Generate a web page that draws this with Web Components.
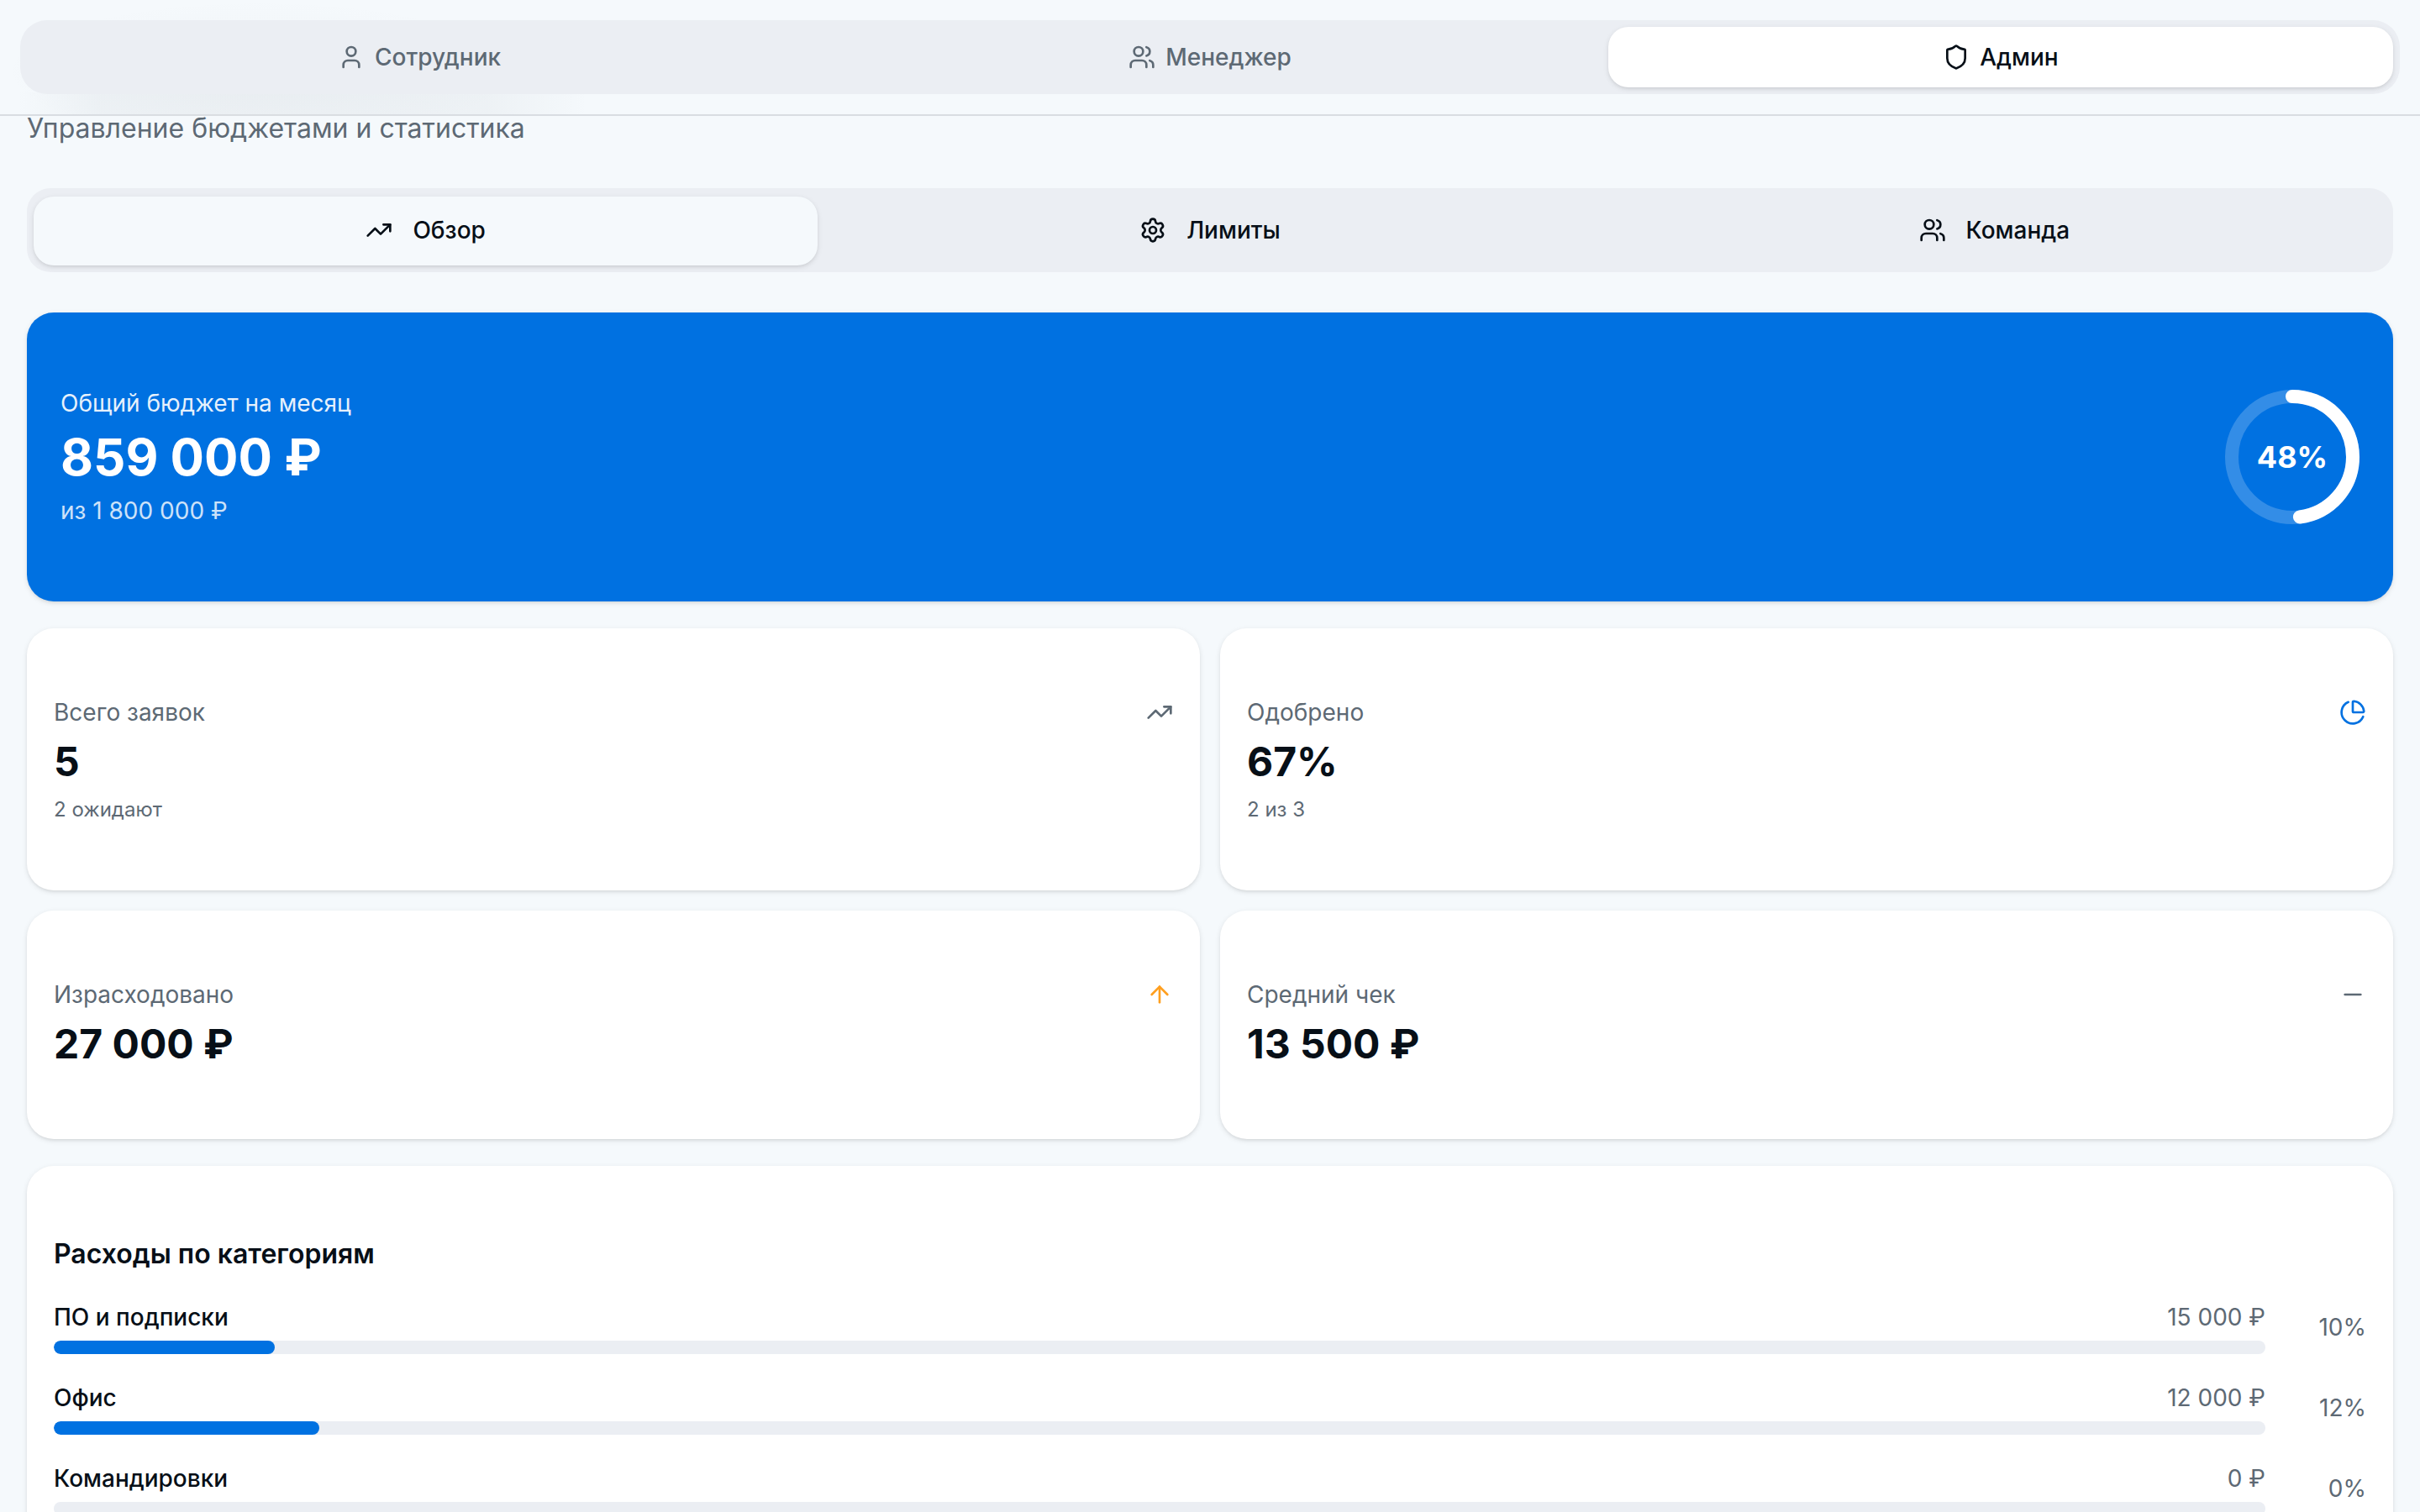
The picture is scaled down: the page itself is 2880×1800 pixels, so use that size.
<!DOCTYPE html>
<html lang="ru">
<head>
<meta charset="utf-8">
<title>Бюджеты</title>
<style>
  html, body { margin: 0; height: 100%; }
  body {
    --bg: #f5f9fc;
    --card: #ffffff;
    --muted: #ebeef3;
    --fg: #070f17;
    --soft: #5d6974;
    --blue: #0071e1;
    --orange: #ff9f1f;
    --shadow: 0 2px 6px rgba(0, 0, 0, .1), 0 2px 4px -2px rgba(0, 0, 0, .1);
    background: var(--bg);
    color: var(--fg);
    font: 400 28px/40px Inter, "Liberation Sans", sans-serif;
    font-optical-sizing: none;
    font-variation-settings: "opsz" 14;
    -webkit-font-smoothing: antialiased;
    overflow: hidden;
  }
</style>
</head>
<body>

<admin-page>
  <role-bar slot="header">
    <role-tab icon="user">Сотрудник</role-tab>
    <role-tab icon="users">Менеджер</role-tab>
    <role-tab icon="shield" active>Админ</role-tab>
  </role-bar>

  <span slot="subtitle">Управление бюджетами и статистика</span>

  <tab-list>
    <tab-item icon="trending" active>Обзор</tab-item>
    <tab-item icon="settings">Лимиты</tab-item>
    <tab-item icon="users">Команда</tab-item>
  </tab-list>

  <budget-card percent="48">
    <span slot="label">Общий бюджет на месяц</span>
    <span slot="value">859&nbsp;000&nbsp;₽</span>
    <span slot="total">из 1&nbsp;800&nbsp;000&nbsp;₽</span>
  </budget-card>

  <stat-grid>
    <stat-card icon="trending" label="Всего заявок" note="2 ожидают">5</stat-card>
    <stat-card icon="pie" tone="blue" label="Одобрено" note="2 из 3">67%</stat-card>
    <stat-card icon="up" tone="orange" label="Израсходовано">27&nbsp;000&nbsp;₽</stat-card>
    <stat-card icon="minus" label="Средний чек">13&nbsp;500&nbsp;₽</stat-card>
  </stat-grid>

  <category-card>
    <span slot="title">Расходы по категориям</span>
    <category-row percent="10" amount="15&nbsp;000&nbsp;₽">ПО и подписки</category-row>
    <category-row percent="12" amount="12&nbsp;000&nbsp;₽">Офис</category-row>
    <category-row percent="0" amount="0&nbsp;₽">Командировки</category-row>
  </category-card>
</admin-page>

<script>
  const ICONS = {
    user: '<path d="M19 21v-2a4 4 0 0 0-4-4H9a4 4 0 0 0-4 4v2"/><circle cx="12" cy="7" r="4"/>',
    users: '<path d="M16 21v-2a4 4 0 0 0-4-4H6a4 4 0 0 0-4 4v2"/><circle cx="9" cy="7" r="4"/><path d="M22 21v-2a4 4 0 0 0-3-3.87"/><path d="M16 3.13a4 4 0 0 1 0 7.75"/>',
    shield: '<path d="M20 13c0 5-3.5 7.5-7.66 8.95a1 1 0 0 1-.67-.01C7.5 20.5 4 18 4 13V6a1 1 0 0 1 1-1c2 0 4.5-1.2 6.24-2.72a1.17 1.17 0 0 1 1.52 0C14.51 3.81 17 5 19 5a1 1 0 0 1 1 1z"/>',
    trending: '<path d="M16 7h6v6"/><path d="m22 7-8.5 8.5-5-5L2 17"/>',
    settings: '<path d="M9.671 4.136a2.34 2.34 0 0 1 4.659 0 2.34 2.34 0 0 0 3.319 1.915 2.34 2.34 0 0 1 2.33 4.033 2.34 2.34 0 0 0 0 3.831 2.34 2.34 0 0 1-2.33 4.033 2.34 2.34 0 0 0-3.319 1.915 2.34 2.34 0 0 1-4.659 0 2.34 2.34 0 0 0-3.32-1.915 2.34 2.34 0 0 1-2.33-4.033 2.34 2.34 0 0 0 0-3.831A2.34 2.34 0 0 1 6.35 6.051a2.34 2.34 0 0 0 3.319-1.915"/><circle cx="12" cy="12" r="3"/>',
    pie: '<path d="M21 12c.552 0 1.005-.449.95-.998a10 10 0 0 0-8.953-8.951c-.55-.055-.998.398-.998.95v8a1 1 0 0 0 1 1z"/><path d="M21.21 15.89A10 10 0 1 1 8 2.83"/>',
    up: '<path d="m5 12 7-7 7 7"/><path d="M12 19V5"/>',
    minus: '<path d="M5 12h14"/>'
  };

  // fills an open shadow root with the given markup
  function shadow(el, html) {
    el.attachShadow({mode: 'open'}).innerHTML = html;
  }

  customElements.define('line-icon', class extends HTMLElement {
    connectedCallback() {
      if (this.shadowRoot) return;
      shadow(this, `
        <style>
          :host { display: block; flex: none; width: 32px; height: 32px; }
          svg { display: block; width: 100%; height: 100%; }
        </style>
        <svg viewBox="0 0 24 24" fill="none" stroke="currentColor" stroke-width="2"
             stroke-linecap="round" stroke-linejoin="round">${ICONS[this.getAttribute('name')]}</svg>
      `);
    }
  });

  customElements.define('admin-page', class extends HTMLElement {
    constructor() {
      super();
      shadow(this, `
        <style>
          :host { display: flex; flex-direction: column; height: 1800px; overflow: hidden; }
          header {
            flex: none;
            padding: 24px;
            border-bottom: 2px solid #d9dde2;
            background:
              radial-gradient(closest-side, rgba(93, 105, 116, .04), transparent) 0 0 / 620px 170px no-repeat,
              linear-gradient(90deg, transparent 20px, rgba(93, 105, 116, .05) 120px,
                rgba(93, 105, 116, .05) 580px, transparent 700px) 0 100% / 100% 26px no-repeat,
              var(--bg);
          }
          main {
            flex: none;
            display: flex;
            flex-direction: column;
            gap: 32px;
            margin-top: -10px;
            padding: 0 32px 32px;
          }
          p { margin: 0 0 15px; padding-top: 1px; font-size: 32px; line-height: 48px; color: var(--soft); }
        </style>
        <header><slot name="header"></slot></header>
        <main>
          <p><slot name="subtitle"></slot></p>
          <slot></slot>
        </main>
      `);
    }
  });

  customElements.define('role-bar', class extends HTMLElement {
    constructor() {
      super();
      shadow(this, `
        <style>
          :host {
            display: grid;
            grid-template-columns: repeat(3, 1fr);
            gap: 7px;
            padding: 8px;
            border-radius: 32px;
            background: var(--muted);
          }
        </style>
        <slot></slot>
      `);
    }
  });

  customElements.define('role-tab', class extends HTMLElement {
    constructor() {
      super();
      shadow(this, `
        <style>
          :host {
            display: flex;
            align-items: center;
            justify-content: center;
            gap: 12px;
            height: 72px;
            border-radius: 24px;
            font-weight: 500;
            color: var(--soft);
          }
          :host([active]) { background: var(--card); color: var(--fg); box-shadow: var(--shadow); }
        </style>
        <line-icon name="${this.getAttribute('icon')}"></line-icon>
        <slot></slot>
      `);
    }
  });

  customElements.define('tab-list', class extends HTMLElement {
    constructor() {
      super();
      shadow(this, `
        <style>
          :host {
            display: grid;
            grid-template-columns: repeat(3, 1fr);
            padding: 10px 8px 8px;
            margin-bottom: 16px;
            border-radius: 28px;
            background: var(--muted);
          }
        </style>
        <slot></slot>
      `);
    }
  });

  customElements.define('tab-item', class extends HTMLElement {
    constructor() {
      super();
      shadow(this, `
        <style>
          :host {
            display: flex;
            align-items: center;
            justify-content: center;
            gap: 24px;
            height: 80px;
            padding-bottom: 2px;
            border-radius: 24px;
            font-weight: 500;
          }
          :host([active]) { background: var(--bg); box-shadow: var(--shadow); }
        </style>
        <line-icon name="${this.getAttribute('icon')}"></line-icon>
        <slot></slot>
      `);
    }
  });

  customElements.define('budget-card', class extends HTMLElement {
    constructor() {
      super();
      const percent = Number(this.getAttribute('percent'));
      shadow(this, `
        <style>
          :host {
            display: flex;
            align-items: center;
            justify-content: space-between;
            padding: 88px 40px;
            border-radius: 32px;
            background: var(--blue);
            color: #fff;
            box-shadow: var(--shadow);
          }
          .text { display: flex; flex-direction: column; gap: 8px; }
          .label { opacity: .9; }
          .value { font-size: 60px; line-height: 72px; font-weight: 700; }
          .total { opacity: .8; }
          .ring { display: grid; place-items: center; width: 160px; height: 160px; }
          .ring > * { grid-area: 1 / 1; }
          svg { transform: rotate(-90deg); }
          b { font-size: 36px; line-height: 56px; font-weight: 700; }
        </style>
        <div class="text">
          <div class="label"><slot name="label"></slot></div>
          <div class="value"><slot name="value"></slot></div>
          <div class="total"><slot name="total"></slot></div>
        </div>
        <div class="ring">
          <svg width="160" height="160" fill="none" stroke-width="16">
            <circle cx="80" cy="80" r="72" stroke="rgba(255,255,255,.2)"/>
            <circle cx="80" cy="80" r="72" stroke="#fff" stroke-linecap="round"
                    pathLength="100" stroke-dasharray="${percent} 100"/>
          </svg>
          <b>${percent}%</b>
        </div>
      `);
    }
  });

  customElements.define('stat-grid', class extends HTMLElement {
    constructor() {
      super();
      shadow(this, `
        <style>
          :host { display: grid; grid-template-columns: 1fr 1fr; gap: 24px; }
        </style>
        <slot></slot>
      `);
    }
  });

  customElements.define('stat-card', class extends HTMLElement {
    constructor() {
      super();
      const note = this.getAttribute('note');
      const tone = this.getAttribute('tone') || 'soft';
      shadow(this, `
        <style>
          :host {
            display: flex;
            flex-direction: column;
            gap: 8px;
            padding: 80px 32px;
            border-radius: 32px;
            background: var(--card);
            box-shadow: var(--shadow);
          }
          .top { display: flex; align-items: center; justify-content: space-between; color: var(--soft); }
          line-icon { color: var(--${tone}); }
          .value { padding-bottom: 2px; font-size: 48px; line-height: 62px; font-weight: 700; }
          .note { font-size: 24px; line-height: 32px; color: var(--soft); }
        </style>
        <div class="top">
          <span>${this.getAttribute('label')}</span>
          <line-icon name="${this.getAttribute('icon')}"></line-icon>
        </div>
        <div class="value"><slot></slot></div>
        ${note ? `<div class="note">${note}</div>` : ''}
      `);
    }
  });

  customElements.define('category-card', class extends HTMLElement {
    constructor() {
      super();
      shadow(this, `
        <style>
          :host {
            display: flex;
            flex-direction: column;
            gap: 32px;
            padding: 80px 32px;
            border-radius: 32px;
            background: var(--card);
            box-shadow: var(--shadow);
          }
          h3 { margin: 0; padding-top: 1px; font-size: 32px; line-height: 47px; font-weight: 600; }
        </style>
        <h3><slot name="title"></slot></h3>
        <slot></slot>
      `);
    }
  });

  customElements.define('category-row', class extends HTMLElement {
    constructor() {
      super();
      const percent = this.getAttribute('percent');
      shadow(this, `
        <style>
          :host { display: flex; align-items: center; gap: 24px; }
          .main { flex: 1; display: flex; flex-direction: column; gap: 8px; }
          .names { display: flex; justify-content: space-between; font-weight: 500; }
          .amount, .percent { font-weight: 400; color: var(--soft); }
          .track { height: 16px; border-radius: 8px; background: var(--muted); overflow: hidden; }
          .fill { width: ${percent}%; height: 100%; border-radius: 8px; background: var(--blue); }
          .percent { width: 96px; text-align: right; }
        </style>
        <div class="main">
          <div class="names">
            <slot></slot>
            <span class="amount">${this.getAttribute('amount')}</span>
          </div>
          <div class="track"><div class="fill"></div></div>
        </div>
        <div class="percent">${percent}%</div>
      `);
    }
  });
</script>
</body>
</html>
